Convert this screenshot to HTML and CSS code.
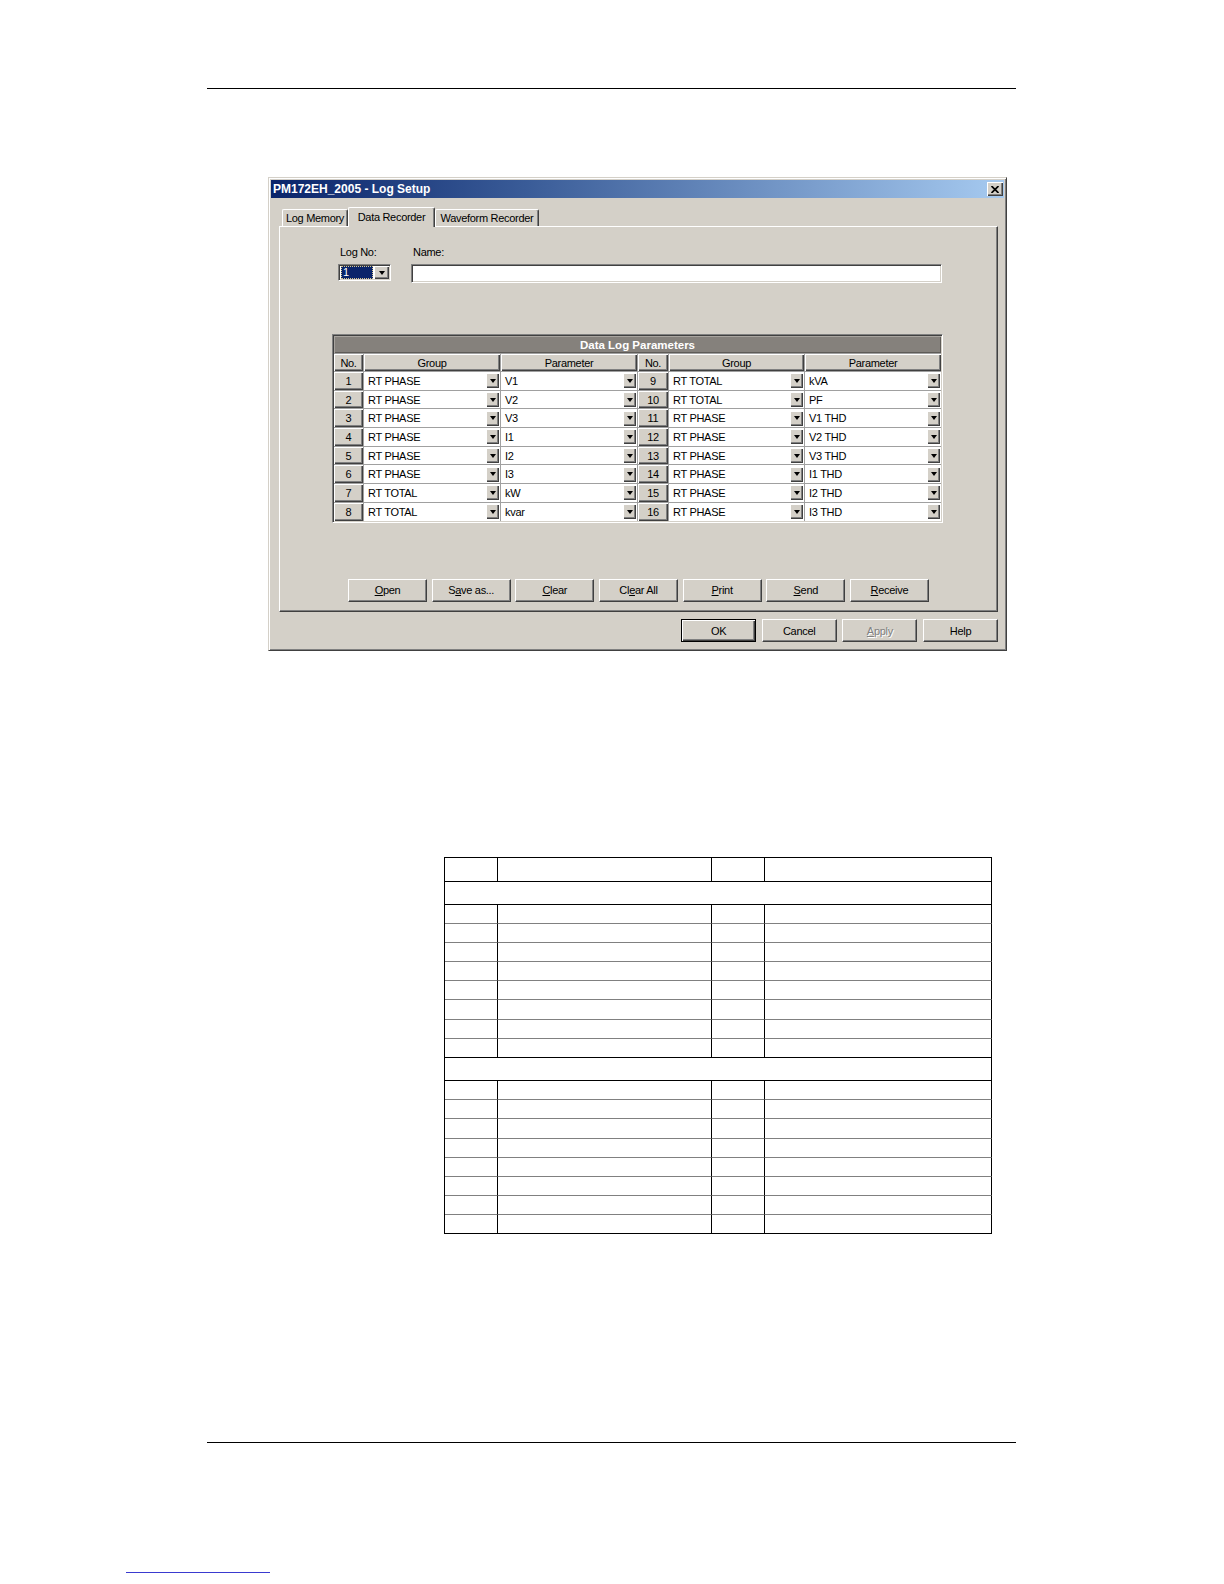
FILE: index.html
```html
<!DOCTYPE html>
<html>
<head>
<meta charset="utf-8">
<title>PM172EH_2005 - Log Setup</title>
<link rel="stylesheet" href="styles.css">
</head>
<body>
<div class="rule rule-top"></div>

<div class="dialog">
  <div class="titlebar">
    <span class="title-text">PM172EH_2005 - Log Setup</span>
    <span class="close-btn"><svg width="8" height="7" viewBox="0 0 8 7"><path d="M0.5 0 L7.5 7 M7.5 0 L0.5 7" stroke="#000" stroke-width="1.7"/></svg></span>
  </div>
  <div class="tabs">
    <div class="tab tab-1">Log Memory</div>
    <div class="tab tab-sel">Data Recorder</div>
    <div class="tab tab-3">Waveform Recorder</div>
  </div>
  <div class="panel">
    <div class="logrow">
      <div class="field">
        <div class="lbl">Log No:</div>
        <div class="combo"><span class="combo-val"><span class="focus">1</span></span><span class="combo-btn"><i class="tri"></i></span></div>
      </div>
      <div class="field">
        <div class="lbl">Name:</div>
        <div class="textbox"></div>
      </div>
    </div>

    <div class="grid">
      <div class="g-title">Data Log Parameters</div>
      <div class="g-head">No.</div><div class="g-head">Group</div><div class="g-head">Parameter</div>
      <div class="g-head">No.</div><div class="g-head">Group</div><div class="g-head">Parameter</div>

      <div class="g-no">1</div><div class="g-sel"><span>RT PHASE</span><i class="dd"></i></div><div class="g-sel"><span>V1</span><i class="dd"></i></div>
      <div class="g-no">9</div><div class="g-sel"><span>RT TOTAL</span><i class="dd"></i></div><div class="g-sel"><span>kVA</span><i class="dd"></i></div>

      <div class="g-no">2</div><div class="g-sel"><span>RT PHASE</span><i class="dd"></i></div><div class="g-sel"><span>V2</span><i class="dd"></i></div>
      <div class="g-no">10</div><div class="g-sel"><span>RT TOTAL</span><i class="dd"></i></div><div class="g-sel"><span>PF</span><i class="dd"></i></div>

      <div class="g-no">3</div><div class="g-sel"><span>RT PHASE</span><i class="dd"></i></div><div class="g-sel"><span>V3</span><i class="dd"></i></div>
      <div class="g-no">11</div><div class="g-sel"><span>RT PHASE</span><i class="dd"></i></div><div class="g-sel"><span>V1 THD</span><i class="dd"></i></div>

      <div class="g-no">4</div><div class="g-sel"><span>RT PHASE</span><i class="dd"></i></div><div class="g-sel"><span>I1</span><i class="dd"></i></div>
      <div class="g-no">12</div><div class="g-sel"><span>RT PHASE</span><i class="dd"></i></div><div class="g-sel"><span>V2 THD</span><i class="dd"></i></div>

      <div class="g-no">5</div><div class="g-sel"><span>RT PHASE</span><i class="dd"></i></div><div class="g-sel"><span>I2</span><i class="dd"></i></div>
      <div class="g-no">13</div><div class="g-sel"><span>RT PHASE</span><i class="dd"></i></div><div class="g-sel"><span>V3 THD</span><i class="dd"></i></div>

      <div class="g-no">6</div><div class="g-sel"><span>RT PHASE</span><i class="dd"></i></div><div class="g-sel"><span>I3</span><i class="dd"></i></div>
      <div class="g-no">14</div><div class="g-sel"><span>RT PHASE</span><i class="dd"></i></div><div class="g-sel"><span>I1 THD</span><i class="dd"></i></div>

      <div class="g-no">7</div><div class="g-sel"><span>RT TOTAL</span><i class="dd"></i></div><div class="g-sel"><span>kW</span><i class="dd"></i></div>
      <div class="g-no">15</div><div class="g-sel"><span>RT PHASE</span><i class="dd"></i></div><div class="g-sel"><span>I2 THD</span><i class="dd"></i></div>

      <div class="g-no">8</div><div class="g-sel"><span>RT TOTAL</span><i class="dd"></i></div><div class="g-sel"><span>kvar</span><i class="dd"></i></div>
      <div class="g-no">16</div><div class="g-sel"><span>RT PHASE</span><i class="dd"></i></div><div class="g-sel"><span>I3 THD</span><i class="dd"></i></div>
    </div>

    <div class="btnrow">
      <div class="btn"><u>O</u>pen</div>
      <div class="btn">S<u>a</u>ve as...</div>
      <div class="btn"><u>C</u>lear</div>
      <div class="btn">Cl<u>e</u>ar All</div>
      <div class="btn"><u>P</u>rint</div>
      <div class="btn"><u>S</u>end</div>
      <div class="btn"><u>R</u>eceive</div>
    </div>
  </div>
  <div class="dlg-btns">
    <div class="btn btn-sm btn-default">OK</div>
    <div class="btn btn-sm">Cancel</div>
    <div class="btn btn-sm btn-disabled"><u>A</u>pply</div>
    <div class="btn btn-sm">Help</div>
  </div>
</div>

<div class="ltable">
  <div class="lt-c lt-h"></div><div class="lt-c lt-h"></div><div class="lt-c lt-h"></div><div class="lt-c lt-h"></div>
  <div class="lt-sec"></div>
  <div class="lt-c"></div><div class="lt-c"></div><div class="lt-c"></div><div class="lt-c"></div>
  <div class="lt-c"></div><div class="lt-c"></div><div class="lt-c"></div><div class="lt-c"></div>
  <div class="lt-c"></div><div class="lt-c"></div><div class="lt-c"></div><div class="lt-c"></div>
  <div class="lt-c"></div><div class="lt-c"></div><div class="lt-c"></div><div class="lt-c"></div>
  <div class="lt-c"></div><div class="lt-c"></div><div class="lt-c"></div><div class="lt-c"></div>
  <div class="lt-c"></div><div class="lt-c"></div><div class="lt-c"></div><div class="lt-c"></div>
  <div class="lt-c"></div><div class="lt-c"></div><div class="lt-c"></div><div class="lt-c"></div>
  <div class="lt-c lt-last"></div><div class="lt-c lt-last"></div><div class="lt-c lt-last"></div><div class="lt-c lt-last"></div>
  <div class="lt-sec"></div>
  <div class="lt-c"></div><div class="lt-c"></div><div class="lt-c"></div><div class="lt-c"></div>
  <div class="lt-c"></div><div class="lt-c"></div><div class="lt-c"></div><div class="lt-c"></div>
  <div class="lt-c"></div><div class="lt-c"></div><div class="lt-c"></div><div class="lt-c"></div>
  <div class="lt-c"></div><div class="lt-c"></div><div class="lt-c"></div><div class="lt-c"></div>
  <div class="lt-c"></div><div class="lt-c"></div><div class="lt-c"></div><div class="lt-c"></div>
  <div class="lt-c"></div><div class="lt-c"></div><div class="lt-c"></div><div class="lt-c"></div>
  <div class="lt-c"></div><div class="lt-c"></div><div class="lt-c"></div><div class="lt-c"></div>
  <div class="lt-c lt-last"></div><div class="lt-c lt-last"></div><div class="lt-c lt-last"></div><div class="lt-c lt-last"></div>
</div>

<div class="rule rule-bottom"></div>
<div class="blue-line"></div>
</body>
</html>
```

FILE: styles.css
```css
* { box-sizing: border-box; }

body {
  margin: 0;
  background: #fff;
  font-family: "Liberation Sans", Arial, sans-serif;
}

.rule {
  height: 1px;
  background: #000;
}
.rule-top {
  margin: 88px 0 0 207px;
  width: 809px;
}
.rule-bottom {
  margin: 208px 0 0 207px;
  width: 809px;
}
.blue-line {
  margin: 129px 0 0 126px;
  width: 144px;
  height: 1px;
  background: #3a3acf;
}

/* ---------- dialog ---------- */
.dialog {
  margin: 88px 0 0 268px;
  width: 739px;
  height: 474px;
  padding: 2px;
  background: #d4d0c8;
  border: 1px solid;
  border-color: #d4d0c8 #404040 #404040 #d4d0c8;
  box-shadow: inset 1px 1px #fff, inset -1px -1px #808080;
  font-size: 11px;
  letter-spacing: -0.3px;
  color: #000;
}

.titlebar {
  height: 18px;
  background: linear-gradient(to right, #0a246a 0%, #3a5c98 35%, #a6caf0 100%);
  display: flex;
  align-items: center;
  justify-content: space-between;
  padding: 0 1px 0 2px;
}
.title-text {
  color: #fff;
  font-weight: bold;
  font-size: 12px;
  letter-spacing: 0;
}
.close-btn {
  width: 16px;
  height: 14px;
  background: #d4d0c8;
  box-shadow: inset 1px 1px #fff, inset -1px -1px #404040, inset -2px -2px #808080;
  display: flex;
  align-items: center;
  justify-content: center;
  padding-right: 1px;
}
.close-btn svg { display: block; }

/* ---------- tabs ---------- */
.tabs {
  margin: 9px 0 0 11px;
  height: 19px;
  display: flex;
  align-items: flex-end;
  position: relative;
  z-index: 1;
}
.tab {
  height: 17px;
  display: flex;
  align-items: center;
  justify-content: center;
  border-top: 1px solid #fff;
  border-left: 1px solid #fff;
  border-right: 1px solid #404040;
  box-shadow: inset -1px 0 #808080;
  border-radius: 2px 2px 0 0;
  white-space: nowrap;
}
.tab-1 { width: 66px; }
.tab-sel {
  width: 87px;
  height: 20px;
  margin-bottom: -1px;
  padding-bottom: 2px;
  background: #d4d0c8;
}
.tab-3 { width: 104px; }

.panel {
  margin-left: 8px;
  width: 719px;
  height: 386px;
  border: 1px solid;
  border-color: #fff #404040 #404040 #fff;
  box-shadow: inset -1px -1px #808080;
}

/* ---------- log no / name ---------- */
.logrow {
  display: flex;
  gap: 20px;
  margin: 19px 0 0 58px;
}
.lbl {
  height: 13px;
  line-height: 13px;
  padding-left: 2px;
}
.combo {
  margin-top: 5px;
  width: 53px;
  height: 17px;
  display: flex;
  background: #fff;
  border: 1px solid;
  border-color: #808080 #fff #fff #808080;
  box-shadow: inset 1px 1px #404040, inset -1px -1px #d4d0c8;
  padding: 1px;
}
.combo-val {
  flex: 1;
  padding: 0 1px;
  display: flex;
}
.focus {
  flex: 1;
  background: #0a246a;
  color: #fff;
  outline: 1px dotted #d8c890;
  outline-offset: -1px;
  line-height: 13px;
  padding-left: 2px;
}
.combo-btn {
  width: 15px;
  height: 13px;
  background: #d4d0c8;
  box-shadow: inset 1px 1px #fff, inset -1px -1px #404040, inset -2px -2px #808080;
  display: flex;
  align-items: center;
  justify-content: center;
}
.tri, .dd::after {
  display: block;
  width: 0;
  height: 0;
  border-left: 3.5px solid transparent;
  border-right: 3.5px solid transparent;
  border-top: 4px solid #000;
}
.textbox {
  margin-top: 5px;
  width: 531px;
  height: 19px;
  background: #fff;
  border: 1px solid;
  border-color: #808080 #fff #fff #808080;
  box-shadow: inset 1px 1px #404040, inset -1px -1px #d4d0c8;
}

/* ---------- parameter grid ---------- */
.grid {
  margin: 51px 0 0 52px;
  width: 611px;
  height: 188.6px;
  border: 1px solid;
  border-color: #808080 #fff #fff #808080;
  box-shadow: inset 1px 1px #404040, inset -1px -1px #d4d0c8;
  padding: 1px;
  background: #a0a0a0;
  display: grid;
  grid-template-columns: 29px 136px 136px 30px 135px 136px;
  grid-template-rows: 17px 17px repeat(8, 17.7px);
  gap: 1px;
}
.g-title {
  grid-column: 1 / -1;
  background: #85817c;
  color: #fff;
  font-weight: bold;
  font-size: 11.5px;
  letter-spacing: 0;
  display: flex;
  align-items: center;
  justify-content: center;
  box-shadow: inset 1px 1px #a8a49f, inset -1px -1px #5e5b57;
}
.g-head, .g-no {
  background: #d4d0c8;
  box-shadow: inset 1px 1px #fff, inset -1px -1px #404040, inset -2px -2px #808080;
  display: flex;
  align-items: center;
  justify-content: center;
}
.g-sel {
  background: #fff;
  display: flex;
  align-items: center;
  justify-content: space-between;
  padding: 0 1px 0 4px;
}
.dd {
  width: 13px;
  height: 15px;
  background: #d4d0c8;
  box-shadow: inset 1px 1px #fff, inset -1px -1px #404040, inset -2px -2px #808080;
  display: flex;
  align-items: center;
  justify-content: center;
}
.dd::after { content: ""; }

/* ---------- buttons ---------- */
.btnrow {
  display: flex;
  gap: 4.67px;
  margin: 56.4px 0 0 68px;
}
.btn {
  width: 79px;
  height: 23px;
  background: #d4d0c8;
  border: 1px solid;
  border-color: #fff #404040 #404040 #fff;
  box-shadow: inset -1px -1px #808080;
  display: flex;
  align-items: center;
  justify-content: center;
  white-space: nowrap;
}
.btn u { text-underline-offset: 1px; }

.dlg-btns {
  display: flex;
  justify-content: flex-end;
  gap: 5.67px;
  margin: 7px 6px 0 0;
}
.btn-sm { width: 75px; }
.btn-default {
  border: 1px solid #000;
  box-shadow: inset 1px 1px #fff, inset -1px -1px #404040, inset -2px -2px #808080;
}
.btn-disabled {
  color: #808080;
  text-shadow: 1px 1px #fff;
}

/* ---------- lower table ---------- */
.ltable {
  margin: 206px 0 0 444px;
  width: 548px;
  display: grid;
  grid-template-columns: 53px 214px 53px 227px;
  border-left: 1px solid #000;
  border-top: 1px solid #000;
}
.lt-c {
  height: 19.1px;
  border-right: 1px solid #000;
  border-bottom: 1px solid #808080;
}
.lt-h {
  height: 23.5px;
  border-bottom-color: #000;
}
.lt-last { border-bottom-color: #000; }
.lt-sec {
  grid-column: 1 / -1;
  height: 23.5px;
  border-right: 1px solid #000;
  border-bottom: 1px solid #000;
}
```
